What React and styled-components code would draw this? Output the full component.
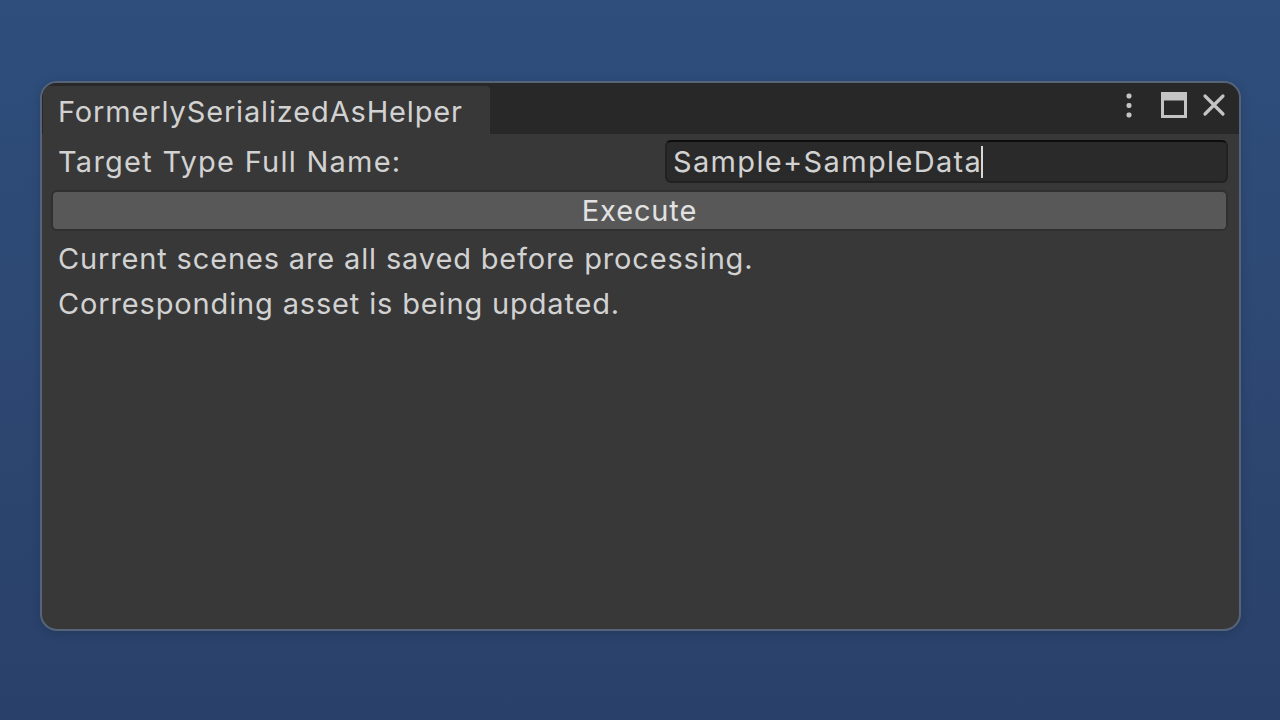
import React from "react";
import styled, { createGlobalStyle } from "styled-components";

const Global = createGlobalStyle`
  html, body { margin: 0; padding: 0; }
  body {
    width: 1280px; height: 720px; overflow: hidden;
    background: linear-gradient(180deg, #2f4e7c 0%, #2c4670 60%, #29406a 100%);
    font-family: Inter, "Noto Sans", sans-serif;
  }
`;

const Stage = styled.div`
  width: 1280px;
  height: 720px;
  box-sizing: border-box;
  padding: 81px 39px 89px 40px;
  display: flex;
`;

const Window = styled.div`
  flex: 1;
  display: flex;
  flex-direction: column;
  background: #383838;
  border: 2px solid #56647a;
  border-radius: 17px;
  overflow: hidden;
  box-shadow: 0 2px 10px rgba(0,0,0,0.15);
`;

const Header = styled.div`
  height: 51px;
  background: #282828;
  display: flex;
  align-items: flex-end;
  padding-left: 1px;
  position: relative;
`;

const Tab = styled.div`
  height: 48px;
  width: 447px;
  box-sizing: border-box;
  background: #383838;
  border-top-left-radius: 6px;
  border-top-right-radius: 4px;
  color: #d2d2d2;
  font-size: 29px;
  letter-spacing: 0.85px;
  display: flex;
  align-items: center;
  padding-left: 15px;
  padding-top: 3px;
`;

const Controls = styled.div`
  position: absolute;
  right: 13px;
  top: 9px;
  display: flex;
  align-items: center;
  gap: 15px;
  color: #c4c4c4;
`;

const Body = styled.div`
  flex: 1;
  display: flex;
  flex-direction: column;
  padding: 5px 11px 0 9px;
`;

const FieldRow = styled.div`
  display: flex;
  align-items: center;
  height: 45px;
`;

const Label = styled.div`
  width: 607px;
  padding-left: 7px;
  color: #d2d2d2;
  font-size: 29px;
  letter-spacing: 1.25px;
`;

const Input = styled.div`
  flex: 1;
  height: 43px;
  box-sizing: border-box;
  background: #2a2a2a;
  border: 2px solid #212121;
  border-top-color: #0d0d0d;
  border-radius: 6px;
  color: #d2d2d2;
  font-size: 29px;
  letter-spacing: 1.35px;
  display: flex;
  align-items: center;
  padding-left: 6px;
`;

const Caret = styled.span`
  display: inline-block;
  width: 2px;
  height: 32px;
  background: #d8d8d8;
  margin-left: -1px;
`;

const Button = styled.div`
  margin-top: 6px;
  height: 41px;
  box-sizing: border-box;
  background: #585858;
  border: 2px solid #303030;
  border-radius: 6px;
  color: #e2e2e2;
  font-size: 29px;
  letter-spacing: 0.85px;
  display: flex;
  align-items: center;
  justify-content: center;
`;

const Message = styled.div`
  color: #d2d2d2;
  font-size: 29px;
  letter-spacing: 0.85px;
  padding-left: 7px;
  height: 45px;
  display: flex;
  align-items: center;
  margin-top: ${(p) => (p.$first ? "5px" : "0")};
`;

export default function App() {
  return (
    <>
      <Global />
      <Stage>
        <Window>
          <Header>
            <Tab>FormerlySerializedAsHelper</Tab>
            <Controls>
              <svg width="6" height="25" viewBox="0 0 6 25">
                <rect x="0.5" y="0.5" width="5" height="5" rx="2" fill="#c4c4c4" />
                <rect x="0.5" y="10" width="5" height="5" rx="2" fill="#c4c4c4" />
                <rect x="0.5" y="19.5" width="5" height="5" rx="2" fill="#c4c4c4" />
              </svg>
              <svg width="26" height="26" viewBox="0 0 26 26" style={{ marginLeft: 14 }}>
                <rect x="1.5" y="1.5" width="23" height="23" fill="none" stroke="#c4c4c4" strokeWidth="3" />
                <rect x="1.5" y="1.5" width="23" height="7" fill="#c4c4c4" />
              </svg>
              <svg width="24" height="24" viewBox="0 0 24 24">
                <path d="M3 3 L21 21 M21 3 L3 21" stroke="#c4c4c4" strokeWidth="3.2" strokeLinecap="round" />
              </svg>
            </Controls>
          </Header>
          <Body>
            <FieldRow>
              <Label>Target Type Full Name:</Label>
              <Input>Sample+SampleData<Caret /></Input>
            </FieldRow>
            <Button>Execute</Button>
            <Message $first>Current scenes are all saved before processing.</Message>
            <Message>Corresponding asset is being updated.</Message>
          </Body>
        </Window>
      </Stage>
    </>
  );
}
